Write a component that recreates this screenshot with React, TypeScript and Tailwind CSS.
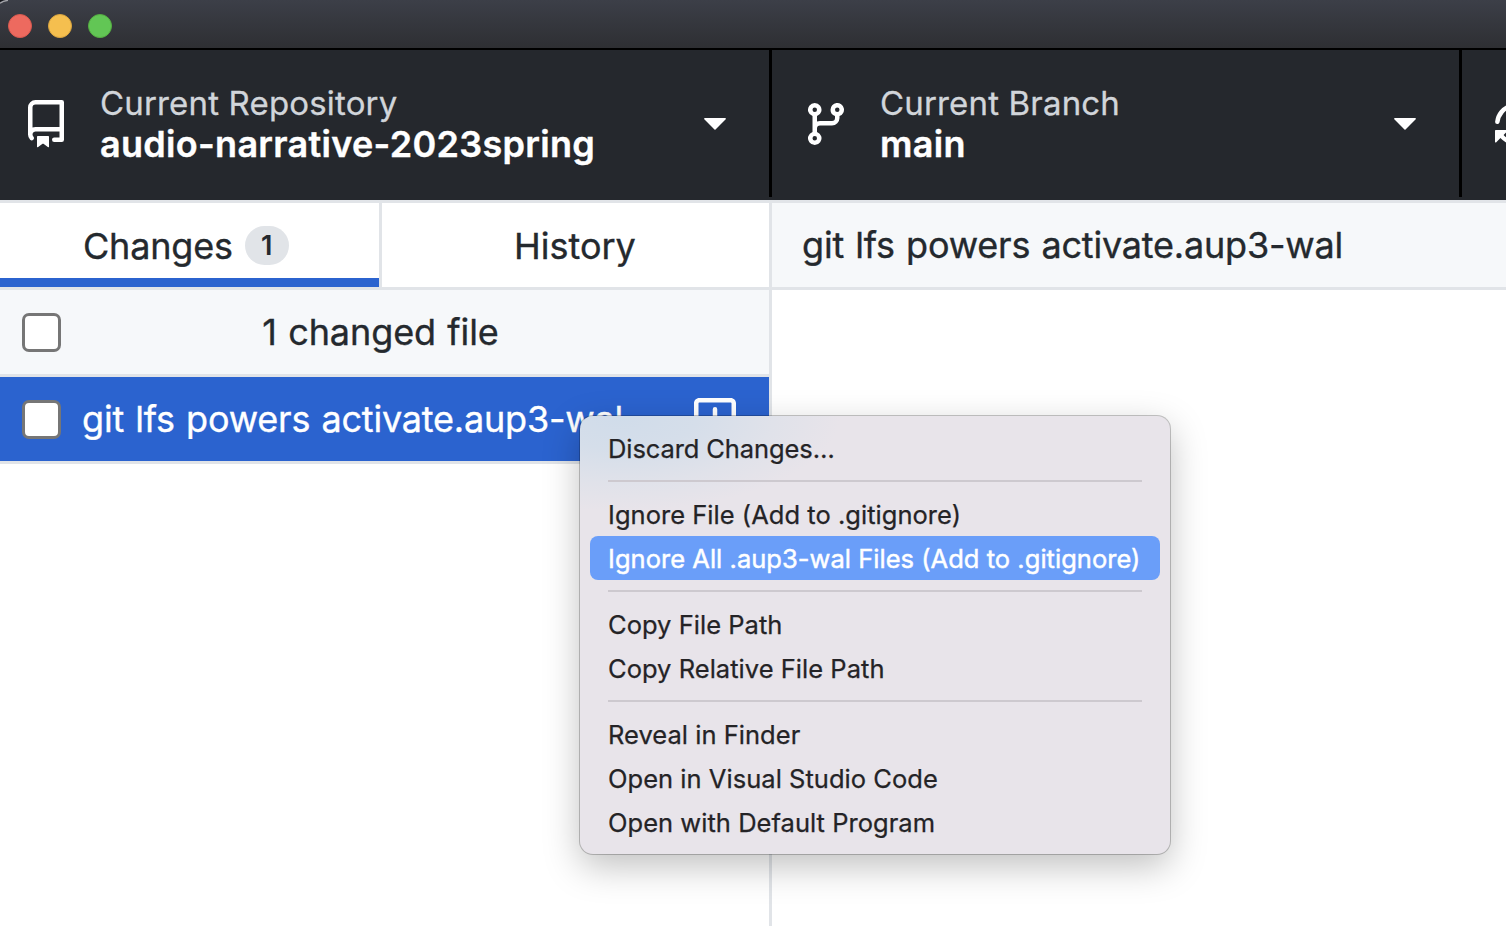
import type { ReactNode } from "react";

const ICONS = {
  repo: "M2 2.5A2.5 2.5 0 014.5 0h8.75a.75.75 0 01.75.75v12.5a.75.75 0 01-.75.75h-2.5a.75.75 0 110-1.5h1.75v-2h-8a1 1 0 00-.714 1.7.75.75 0 01-1.072 1.05A2.495 2.495 0 012 11.5v-9zm10.5-1V9h-8c-.356 0-.694.074-1 .208V2.5a1 1 0 011-1h8zM5 12.25v3.25a.25.25 0 00.4.2l1.45-1.087a.25.25 0 01.3 0L8.6 15.7a.25.25 0 00.4-.2v-3.25a.25.25 0 00-.25-.25h-3.5a.25.25 0 00-.25.25z",
  branch:
    "M11.75 2.5a.75.75 0 100 1.5.75.75 0 000-1.5zm-2.25.75a2.25 2.25 0 113 2.122V6A2.5 2.5 0 0110 8.5H6a1 1 0 00-1 1v1.128a2.251 2.251 0 11-1.5 0V5.372a2.25 2.25 0 111.5 0v1.836A2.492 2.492 0 016 7h4a1 1 0 001-1v-.628A2.25 2.25 0 019.5 3.25zM4.25 12a.75.75 0 100 1.5.75.75 0 000-1.5zM3.5 3.25a.75.75 0 111.5 0 .75.75 0 01-1.5 0z",
  sync: "M8 2.5a5.487 5.487 0 00-4.131 1.869l1.204 1.204A.25.25 0 014.896 6H1.25A.25.25 0 011 5.75V2.104a.25.25 0 01.427-.177l1.38 1.38A7.001 7.001 0 0114.95 7.16a.75.75 0 11-1.49.178A5.501 5.501 0 008 2.5zM1.705 8.005a.75.75 0 01.834.656 5.501 5.501 0 009.592 2.97l-1.204-1.204a.25.25 0 01.177-.427h3.646a.25.25 0 01.25.25v3.646a.25.25 0 01-.427.177l-1.38-1.38A7.001 7.001 0 011.05 8.84a.75.75 0 01.656-.834z",
  caret:
    "M4.427 7.427l3.396 3.396a.25.25 0 00.354 0l3.396-3.396A.25.25 0 0011.396 7H4.604a.25.25 0 00-.177.427z",
  added:
    "M13.25 2.5H2.75a.25.25 0 00-.25.25v10.5c0 .138.112.25.25.25h10.5a.25.25 0 00.25-.25V2.75a.25.25 0 00-.25-.25zM2.75 1h10.5c.966 0 1.75.784 1.75 1.75v10.5A1.75 1.75 0 0113.25 15H2.75A1.75 1.75 0 011 13.25V2.75C1 1.784 1.784 1 2.75 1zM8 4a.75.75 0 01.75.75v2.5h2.5a.75.75 0 010 1.5h-2.5v2.5a.75.75 0 01-1.5 0v-2.5h-2.5a.75.75 0 010-1.5h2.5v-2.5A.75.75 0 018 4z",
};

function Icon({ name, className = "" }: { name: keyof typeof ICONS; className?: string }) {
  return (
    <svg viewBox="0 0 16 16" fill="currentColor" className={`size-12 shrink-0 ${className}`}>
      <path fillRule="evenodd" d={ICONS[name]} />
    </svg>
  );
}

function ToolbarButton({
  icon,
  label,
  value,
  className,
}: {
  icon: "repo" | "branch";
  label: string;
  value: string;
  className: string;
}) {
  return (
    <button className={`flex h-[147px] items-center border-r-[3px] border-black text-left ${className}`}>
      <Icon name={icon} />
      <span className="ml-[30px] flex min-w-0 flex-1 flex-col whitespace-nowrap">
        <span className="text-[33px] leading-[41px] tracking-[0.17px] text-[#d1d5da] [-webkit-text-stroke:0.3px]">{label}</span>
        <span className="text-[36px] leading-[41px] font-semibold tracking-[0.3px] text-white [-webkit-text-stroke:0.4px]">
          {value}
        </span>
      </span>
      <Icon name="caret" className="mb-[5px]" />
    </button>
  );
}

function Checkbox() {
  return <span className="size-[39px] shrink-0 rounded-[7px] border-[3px] border-[#767676] bg-white" />;
}

function MenuItem({ children, active = false }: { children: ReactNode; active?: boolean }) {
  return (
    <div
      className={`mx-[10px] flex h-11 items-center rounded-[8px] pl-[18px] text-[25.5px] whitespace-nowrap ${
        active
          ? "bg-[#6a9ef9] tracking-[0.03px] text-white [-webkit-text-stroke:0.45px]"
          : "tracking-[0.03px] text-[#242326] [-webkit-text-stroke:0.25px]"
      }`}
    >
      <span className="pt-[3px]">{children}</span>
    </div>
  );
}

function MenuSeparator() {
  return (
    <div className="flex h-[22px] items-center px-7">
      <div className="h-[2px] flex-1 bg-[#cdc9cf]" />
    </div>
  );
}

function ContextMenu() {
  return (
    <div className="absolute top-[416px] left-[580px] w-[590px] rounded-[13px] bg-[#e8e4ea] bg-[radial-gradient(ellipse_220px_95px_at_40px_0px,#d0dcea_0%,#d5deea_35%,#e0e2ea_70%,#e8e4ea_100%)] py-[10px] shadow-[0_0_0_1px_rgba(0,0,0,0.22),0_12px_36px_rgba(0,0,0,0.25)]">
      <MenuItem>
        <span className="tracking-[-0.1px]">Discard Changes…</span>
      </MenuItem>
      <MenuSeparator />
      <MenuItem>Ignore File (Add to .gitignore)</MenuItem>
      <MenuItem active>Ignore All .aup3-wal Files (Add to .gitignore)</MenuItem>
      <MenuSeparator />
      <MenuItem>Copy File Path</MenuItem>
      <MenuItem>Copy Relative File Path</MenuItem>
      <MenuSeparator />
      <MenuItem>Reveal in Finder</MenuItem>
      <MenuItem>Open in Visual Studio Code</MenuItem>
      <MenuItem>Open with Default Program</MenuItem>
    </div>
  );
}

export default function App() {
  return (
    <div className="relative flex h-[926px] w-[1506px] flex-col overflow-hidden bg-white font-['Inter',sans-serif] text-[#24292e]">
      <header className="flex h-[50px] shrink-0 items-center gap-4 border-b-2 border-black bg-linear-to-b from-[#3c3f48] to-[#2e2f33] pt-1 pl-2">
        <span className="size-6 rounded-full border border-[#d9594f] bg-[#ed6a5f]" />
        <span className="size-6 rounded-full border border-[#dba53e] bg-[#f5bf4f]" />
        <span className="size-6 rounded-full border border-[#55ae41] bg-[#62c655]" />
      </header>
      <svg viewBox="0 0 10 10" className="absolute top-0 left-0 size-[10px]">
        <path d="M0 0H4L0 2Z" fill="#15161a" />
        <path d="M0 3.2Q3 0.8 8 0.3" fill="none" stroke="#a4a5aa" strokeWidth="1.2" />
      </svg>

      <nav className="flex h-[150px] shrink-0 bg-[#25282d] text-white">
        <ToolbarButton icon="repo" label="Current Repository" value="audio-narrative-2023spring" className="w-[772px] pr-[30px] pl-[22px]" />
        <ToolbarButton icon="branch" label="Current Branch" value="main" className="w-[690px] pr-[30px] pl-[30px]" />
        <div className="flex h-[147px] flex-1 items-center overflow-hidden pl-[30px]">
          <Icon name="sync" className="-scale-x-100 rotate-180" />
        </div>
      </nav>

      <main className="flex flex-1 border-t-[3px] border-[#e1e4e8] text-[36px] leading-none whitespace-nowrap [-webkit-text-stroke:0.35px]">
        <aside className="flex w-[772px] shrink-0 flex-col border-r-[3px] border-[#e1e4e8]">
          <div className="flex h-[87px] border-b-[3px] border-[#e1e4e8]">
            <div className="flex w-[382px] flex-col border-r-[3px] border-[#e1e4e8]">
              <div className="flex h-[75px] items-center gap-[12px] pt-[10px] pl-[83px]">
                <span className="tracking-[-0.2px]">Changes</span>
                <span className="flex h-[39px] w-11 items-center justify-center rounded-full bg-[#e1e4e8] text-[27px] font-semibold [-webkit-text-stroke:0]">
                  1
                </span>
              </div>
              <div className="h-[9px] bg-[#2b63cf]" />
            </div>
            <div className="flex h-[75px] flex-1 items-center pt-[10px] pl-[132px]">
              <span>History</span>
            </div>
          </div>
          <div className="flex h-[87px] items-center border-b-[3px] border-[#e1e4e8] bg-[#f6f8fa] pr-[69px] pl-[22px]">
            <Checkbox />
            <span className="flex-1 text-center tracking-[-0.1px] [word-spacing:1.3px]">1 changed file</span>
          </div>
          <div className="flex h-[87px] items-center border-b-[3px] border-[#e1e4e8] bg-[#2b63cf] pr-[30px] pl-[22px] text-white">
            <Checkbox />
            <span className="ml-[21px] flex-1 tracking-[-0.2px] [word-spacing:1.3px]">git lfs powers activate.aup3-wal</span>
            <Icon name="added" />
          </div>
        </aside>
        <section className="flex flex-1 flex-col">
          <div className="flex h-[87px] items-center border-b-[3px] border-[#e1e4e8] bg-[#f6f8fa] pl-[30px]">
            <span className="tracking-[-0.2px] [word-spacing:1.3px]">git lfs powers activate.aup3-wal</span>
          </div>
        </section>
      </main>

      <ContextMenu />
    </div>
  );
}
